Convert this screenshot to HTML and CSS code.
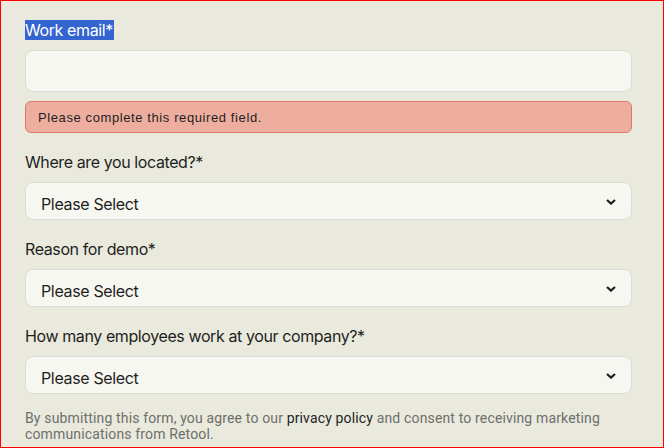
FILE: index.html
```html
<!DOCTYPE html>
<html>
<head>
<meta charset="utf-8">
<link rel="stylesheet" href="styles.css">
</head>
<body>
<div class="page">
  <form class="form">
    <div class="field">
      <label class="label"><span class="selected">Work email*</span></label>
      <div class="input"></div>
      <div class="error">Please complete this required field.</div>
    </div>
    <div class="field">
      <label class="label">Where are you located?*</label>
      <div class="select"><span>Please Select</span><svg class="chev" viewBox="0 0 10 6" width="10" height="6"><path d="M1 1 L5 4.6 L9 1" fill="none" stroke="#1e1e1e" stroke-width="2.2"/></svg></div>
    </div>
    <div class="field">
      <label class="label">Reason for demo*</label>
      <div class="select"><span>Please Select</span><svg class="chev" viewBox="0 0 10 6" width="10" height="6"><path d="M1 1 L5 4.6 L9 1" fill="none" stroke="#1e1e1e" stroke-width="2.2"/></svg></div>
    </div>
    <div class="field">
      <label class="label">How many employees work at your company?*</label>
      <div class="select"><span>Please Select</span><svg class="chev" viewBox="0 0 10 6" width="10" height="6"><path d="M1 1 L5 4.6 L9 1" fill="none" stroke="#1e1e1e" stroke-width="2.2"/></svg></div>
    </div>
    <p class="legal">By submitting this form, you agree to our <a class="link">privacy policy</a> and consent to receiving marketing communications from Retool.</p>
  </form>
</div>
</body>
</html>
```
FILE: styles.css
```css
html, body { margin: 0; padding: 0; }
body {
  width: 664px;
  height: 448px;
  box-sizing: border-box;
  border: 1px solid #ff0000;
  background: #e9e9de;
  font-family: Inter, "Noto Sans", sans-serif;
  color: #1f1f1c;
  overflow: hidden;
}
.page { padding: 17px 31px 0 24px; }
.form { display: flex; flex-direction: column; }
.field { display: flex; flex-direction: column; margin-bottom: 17px; }
.label {
  font-size: 16px;
  line-height: 24px;
  letter-spacing: -0.4px;
  margin-bottom: 8px;
}
.selected { background: #3464cf; color: #ffffff; padding: 0 1px 0 0; }
.input {
  height: 40px;
  background: #f7f7f2;
  border: 1px solid #dcdcd4;
  border-radius: 8px;
}
.error {
  margin-top: 9px;
  height: 30px;
  background: #eeae9f;
  border: 1px solid #de7a63;
  border-radius: 6px;
  font-family: "Liberation Sans", Arial, sans-serif;
  font-size: 13px;
  letter-spacing: 0.6px;
  line-height: 31px;
  padding-left: 12px;
  color: #1e1e1e;
}
.select {
  height: 36px;
  background: #f7f7f2;
  border: 1px solid #dcdcd4;
  border-radius: 8px;
  display: flex;
  align-items: center;
  justify-content: space-between;
  padding: 0 15px 0 15px;
  font-size: 16px;
  letter-spacing: -0.35px;
}
.select span { padding-top: 5px; }
.chev { margin-top: 2px; }
.legal {
  margin: -1px 0 0 0;
  font-family: Roboto, "Liberation Sans", sans-serif;
  font-size: 14px;
  line-height: 16px;
  color: #6f6f6a;
  letter-spacing: 0.15px;
}
.link { color: #1e1e1e; text-decoration: none; }
```
